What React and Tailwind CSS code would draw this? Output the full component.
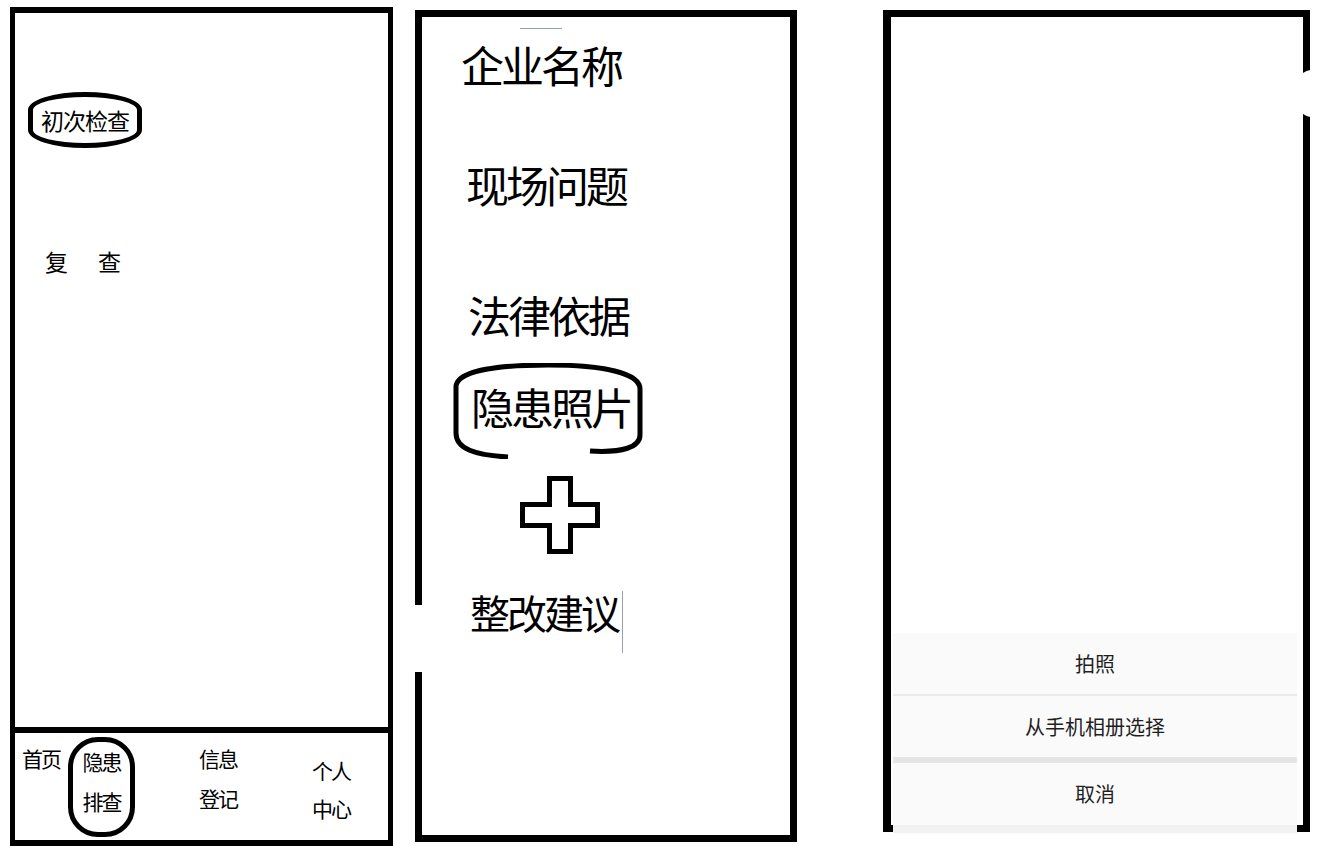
import React from 'react'

// Wireframe: 隐患排查 flow, three phone screens side by side

const cjk = "font-['Noto_Sans_CJK_SC','Noto_Sans',sans-serif]"

function PlusIcon() {
  return (
    <svg width="80" height="78" viewBox="0 0 80 78" className="block">
      <polygon
        points="29.5,2.5 50.5,2.5 50.5,28.5 77.5,28.5 77.5,49.5 50.5,49.5 50.5,75.5 29.5,75.5 29.5,49.5 2.5,49.5 2.5,28.5 29.5,28.5"
        fill="white"
        stroke="black"
        strokeWidth="5"
        strokeLinejoin="miter"
      />
    </svg>
  )
}

function BrokenOval() {
  // hand-drawn ring round 隐患照片, open at the bottom
  return (
    <svg
      width="190"
      height="96"
      viewBox="0 0 190 96"
      className="absolute left-[-18px] top-[-22px] pointer-events-none"
    >
      <path
        d="M55 94 C22 92 3 86 3 70 L3 24 C3 9 40 2 95 2 C150 2 187 10 187 26 L187 72 C187 84 170 90 137 88"
        fill="none"
        stroke="black"
        strokeWidth="5"
        strokeLinecap="butt"
      />
    </svg>
  )
}

function HomeScreen() {
  return (
    <div className="ml-[10px] mt-[7px] w-[383px] h-[839px] border-y-[6px] border-x-[5px] border-black flex flex-col shrink-0">
      {/* 检查类型 */}
      <div className="flex-1 flex flex-col items-start pl-[13px] pt-[79px]">
        <div className="w-[114px] h-[56px] border-[5px] border-black rounded-[50%/18px] flex items-center justify-center">
          <span className="text-[23px] leading-none tracking-[-1px] text-black">初次检查</span>
        </div>
        <div className="mt-[102px] ml-[17px] flex gap-[30px] text-[23px] leading-none text-black">
          <span>复</span>
          <span>查</span>
        </div>
      </div>

      {/* 底部导航 */}
      <div className="h-[113px] border-t-[6px] border-black flex items-start text-[21px] leading-none tracking-[-2px] text-black">
        <div className="ml-[7px] mt-[15px]">首页</div>
        <div className="ml-[8px] mt-[4px] w-[67px] h-[100px] border-[5px] border-black rounded-[30px] flex flex-col items-center pt-[9px] gap-[19px]">
          <span>隐患</span>
          <span>排查</span>
        </div>
        <div className="ml-[64px] mt-[15px] flex flex-col gap-[19px]">
          <span>信息</span>
          <span>登记</span>
        </div>
        <div className="ml-[75px] mt-[27px] flex flex-col gap-[17px]">
          <span>个人</span>
          <span>中心</span>
        </div>
      </div>
    </div>
  )
}

function FormScreen() {
  return (
    <div className="relative ml-[22px] mt-[10px] w-[382px] h-[832px] border-[7px] border-black flex flex-col items-start text-[43px] leading-none tracking-[-3px] text-black shrink-0">
      {/* 左边框断口 */}
      <div className="absolute left-[-7px] top-[588px] w-[7px] h-[67px] bg-white" />

      <div className="ml-[98px] mt-[11px] w-[42px] h-px bg-gray-400" />
      <div className="ml-[39px] mt-[14px]">企业名称</div>
      <div className="ml-[44px] mt-[77px]">现场问题</div>
      <div className="ml-[46px] mt-[87px]">法律依据</div>
      <div className="relative ml-[49px] mt-[49px]">
        <BrokenOval />
        <span className="relative">隐患照片</span>
      </div>
      <div className="ml-[98px] mt-[48px]">
        <PlusIcon />
      </div>
      <div className="ml-[48px] mt-[38px] flex items-start">
        <span className="text-[40px] tracking-[-3px]">整改建议</span>
        <span className="ml-[4px] mt-[-1px] w-px h-[62px] bg-gray-400" />
      </div>
    </div>
  )
}

function PhotoSheetScreen() {
  const options = ['拍照', '从手机相册选择']
  return (
    <div className="relative ml-[86px] mt-[10px] w-[427px] h-[822px] border-[7px] border-l-[8px] border-black flex flex-col shrink-0">
      {/* 右边框缺口 */}
      <div className="absolute right-[-9px] top-[53px] w-[14px] h-[47px] rounded-l-full bg-white" />

      <div className="mt-auto ml-[2px] mr-[6px] mb-[-8px] bg-[#fafafa] flex flex-col text-[20px] leading-none text-[#1f1f1f]">
        {options.map((label, i) => (
          <div key={label}>
            <div className="h-[61px] flex items-center justify-center">{label}</div>
            {i === 0 && <div className="h-[2px] bg-[#ebebeb]" />}
          </div>
        ))}
        <div className="h-[6px] bg-[#e6e6e6]" />
        <div className="h-[62px] flex items-center justify-center">取消</div>
        <div className="h-[8px] bg-[#f1f1f1]" />
      </div>
    </div>
  )
}

export default function App() {
  return (
    <div className={`w-[1334px] h-[846px] bg-white overflow-hidden flex items-start ${cjk}`}>
      <HomeScreen />
      <FormScreen />
      <PhotoSheetScreen />
    </div>
  )
}
